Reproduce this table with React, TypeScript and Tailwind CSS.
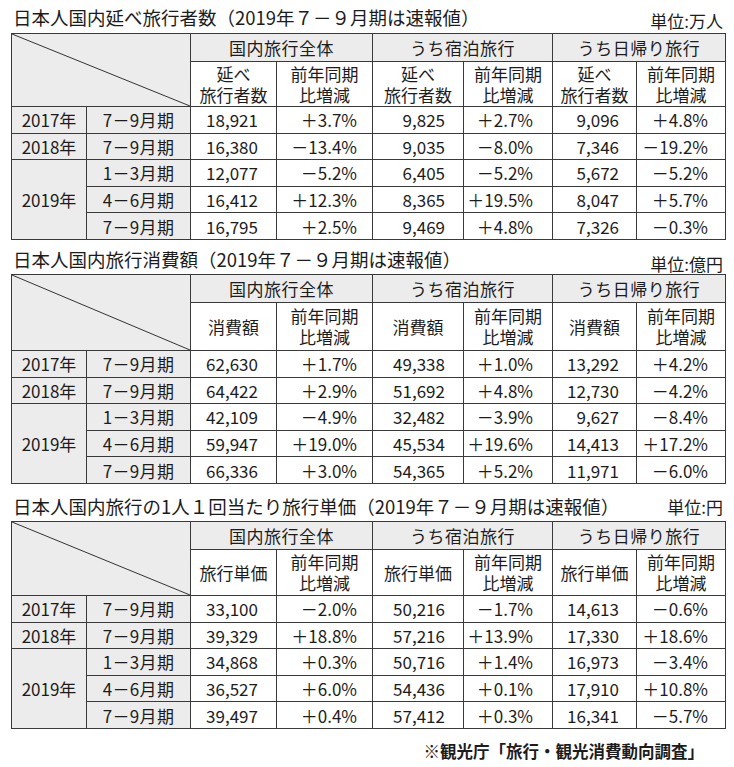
import React from "react";

type Row = { year?: string; span?: number; period: string; v: string[] };

const T1: Row[] = [
  { year: "2017年", span: 1, period: "7－9月期", v: ["18,921", "＋3.7%", "9,825", "＋2.7%", "9,096", "＋4.8%"] },
  { year: "2018年", span: 1, period: "7－9月期", v: ["16,380", "－13.4%", "9,035", "－8.0%", "7,346", "－19.2%"] },
  { year: "2019年", span: 3, period: "1－3月期", v: ["12,077", "－5.2%", "6,405", "－5.2%", "5,672", "－5.2%"] },
  { period: "4－6月期", v: ["16,412", "＋12.3%", "8,365", "＋19.5%", "8,047", "＋5.7%"] },
  { period: "7－9月期", v: ["16,795", "＋2.5%", "9,469", "＋4.8%", "7,326", "－0.3%"] },
];

const T2: Row[] = [
  { year: "2017年", span: 1, period: "7－9月期", v: ["62,630", "＋1.7%", "49,338", "＋1.0%", "13,292", "＋4.2%"] },
  { year: "2018年", span: 1, period: "7－9月期", v: ["64,422", "＋2.9%", "51,692", "＋4.8%", "12,730", "－4.2%"] },
  { year: "2019年", span: 3, period: "1－3月期", v: ["42,109", "－4.9%", "32,482", "－3.9%", "9,627", "－8.4%"] },
  { period: "4－6月期", v: ["59,947", "＋19.0%", "45,534", "＋19.6%", "14,413", "＋17.2%"] },
  { period: "7－9月期", v: ["66,336", "＋3.0%", "54,365", "＋5.2%", "11,971", "－6.0%"] },
];

const T3: Row[] = [
  { year: "2017年", span: 1, period: "7－9月期", v: ["33,100", "－2.0%", "50,216", "－1.7%", "14,613", "－0.6%"] },
  { year: "2018年", span: 1, period: "7－9月期", v: ["39,329", "＋18.8%", "57,216", "＋13.9%", "17,330", "＋18.6%"] },
  { year: "2019年", span: 3, period: "1－3月期", v: ["34,868", "＋0.3%", "50,716", "＋1.4%", "16,973", "－3.4%"] },
  { period: "4－6月期", v: ["36,527", "＋6.0%", "54,436", "＋0.1%", "17,910", "＋10.8%"] },
  { period: "7－9月期", v: ["39,497", "＋0.4%", "57,412", "＋0.3%", "16,341", "－5.7%"] },
];

const cell = "border border-[#3a3a3a] p-0";
const gray = "bg-[#ececec]";
const padCls = ["pr-[18px]", "pr-[15px]", "pr-[18px]", "pr-[19px]", "pr-[17px]", "pr-[17px]"];

function SubHead({ label }: { label: React.ReactNode }) {
  return (
    <>
      <td className={`${cell} text-center align-middle`}>{label}</td>
      <td className={`${cell} text-center align-middle`}>
        前年同期
        <br />
        比増減
      </td>
    </>
  );
}

function DataTable({ rows, sub, h2 }: { rows: Row[]; sub: React.ReactNode; h2: string }) {
  return (
    <table className="table-fixed w-[714px] border-collapse border-[1.5px] border-[#111] text-[17px] leading-[21px] text-[#1c1c1c]">
      <colgroup>
        <col className="w-[75px]" />
        <col className="w-[104px]" />
        <col className="w-[86px]" />
        <col className="w-[96px]" />
        <col className="w-[91px]" />
        <col className="w-[89px]" />
        <col className="w-[84px]" />
        <col className="w-[89px]" />
      </colgroup>
      <tbody>
        <tr className="h-[28px]">
          <td colSpan={2} rowSpan={2} className={`${cell} ${gray} relative`}>
            <svg className="absolute inset-0 w-full h-full" preserveAspectRatio="none" viewBox="0 0 100 100">
              <line x1="0" y1="0" x2="100" y2="100" stroke="#333" strokeWidth="1" vectorEffect="non-scaling-stroke" />
            </svg>
          </td>
          <td colSpan={2} className={`${cell} ${gray} text-center tracking-[0.5px]`}>国内旅行全体</td>
          <td colSpan={2} className={`${cell} ${gray} text-center tracking-[0.5px]`}>うち宿泊旅行</td>
          <td colSpan={2} className={`${cell} ${gray} text-center tracking-[0.5px]`}>うち日帰り旅行</td>
        </tr>
        <tr className={h2}>
          <SubHead label={sub} />
          <SubHead label={sub} />
          <SubHead label={sub} />
        </tr>
        {rows.map((r, i) => (
          <tr key={i} className="h-[26.6px]">
            {r.year && (
              <td rowSpan={r.span} className={`${cell} ${gray} text-center`}>
                {r.year}
              </td>
            )}
            <td className={`${cell} ${gray} text-center tracking-[0.3px]`}>{r.period}</td>
            {r.v.map((x, j) => (
              <td key={j} className={`${cell} text-right ${padCls[j]}`}>
                {x}
              </td>
            ))}
          </tr>
        ))}
      </tbody>
    </table>
  );
}

export default function App() {
  return (
    <div className="w-[734px] h-[767px] bg-white pl-[11px] font-['Noto_Sans_CJK_JP',sans-serif] text-[#1c1c1c]">
      <div className="w-[714px] h-[33px] flex justify-between items-end pl-[2px] pr-[2px]">
        <div className="text-[18.5px] leading-[22px] pb-[5px] whitespace-nowrap">
          日本人国内延べ旅行者数（2019年７－９月期は速報値）
        </div>
        <div className="text-[17px] leading-[20px] pb-[2px]">単位:万人</div>
      </div>
      <DataTable
        rows={T1}
        h2="h-[45px]"
        sub={
          <>
            延べ
            <br />
            旅行者数
          </>
        }
      />
      <div className="w-[714px] h-[34px] flex justify-between items-end pl-[2px] pr-[2px]">
        <div className="text-[18.5px] leading-[22px] pb-[4px] whitespace-nowrap">
          日本人国内旅行消費額（2019年７－９月期は速報値）
        </div>
        <div className="text-[17px] leading-[20px] pb-0">単位:億円</div>
      </div>
      <DataTable rows={T2} h2="h-[48px]" sub="消費額" />
      <div className="w-[714px] h-[37px] flex justify-between items-end pl-[2px] pr-[2px]">
        <div className="text-[18.5px] leading-[22px] pb-[4px] whitespace-nowrap">
          日本人国内旅行の1人１回当たり旅行単価（2019年７－９月期は速報値）
        </div>
        <div className="text-[17px] leading-[20px] pb-[4px]">単位:円</div>
      </div>
      <DataTable rows={T3} h2="h-[46px]" sub="旅行単価" />
      <div className="w-[714px] flex justify-end pr-[21px] pt-[11px]">
        <div className="text-[16.5px] leading-[22px] font-bold">※観光庁「旅行・観光消費動向調査」</div>
      </div>
    </div>
  );
}
